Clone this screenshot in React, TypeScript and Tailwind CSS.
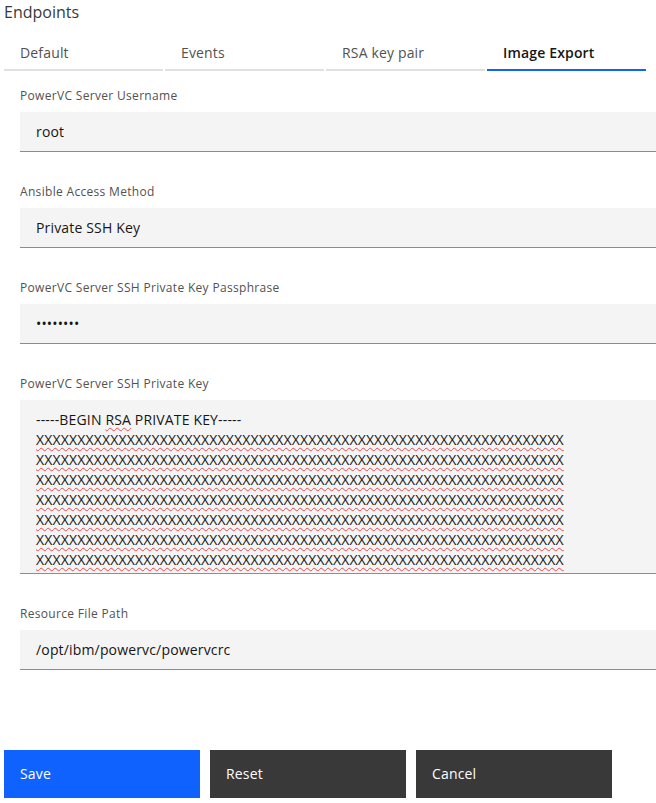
import React from "react";

const X = "X".repeat(64);

function Field({ label, value, mt }: { label: string; value: string; mt?: string }) {
  return (
    <div className={`flex flex-col ${mt ?? ""}`}>
      <div className="text-[12px] leading-[16px] tracking-[0.32px] text-[#525252] h-[16px]">{label}</div>
      <div className="mt-[8px] h-[40px] bg-[#f4f4f4] border-b border-[#8d8d8d] flex items-center pl-[16px] text-[14px] tracking-[0.16px] text-[#161616]">
        {value}
      </div>
    </div>
  );
}

export default function App() {
  const tabs = ["Default", "Events", "RSA key pair", "Image Export"];
  return (
    <div className="w-[656px] h-[803px] bg-white overflow-hidden" style={{ fontFamily: '"Open Sans", sans-serif' }}>
      <div className="pl-[4px] pt-[1px] text-[16px] leading-[22px] text-[#393939]">Endpoints</div>
      <div className="flex gap-[2px] pl-[4px] mt-[12px]">
        {tabs.map((t, i) => (
          <div
            key={t}
            className={`w-[159px] h-[36px] pl-[16px] pt-[8px] text-[14px] leading-[20px] tracking-[0.16px] border-b-2 ${
              i === 3 ? "border-[#0f62fe] text-[#161616] font-semibold" : "border-[#e0e0e0] text-[#525252]"
            }`}
          >
            {t}
          </div>
        ))}
      </div>
      <div className="pl-[20px] pt-[17px] flex flex-col">
        <Field label="PowerVC Server Username" value="root" />
        <Field label="Ansible Access Method" value="Private SSH Key" mt="mt-[32px]" />
        <Field label="PowerVC Server SSH Private Key Passphrase" value="••••••••" mt="mt-[32px]" />
        <div className="flex flex-col mt-[32px]">
          <div className="text-[12px] leading-[16px] tracking-[0.32px] text-[#525252] h-[16px]">PowerVC Server SSH Private Key</div>
          <div className="mt-[8px] h-[174px] bg-[#f4f4f4] border-b border-[#8d8d8d] pl-[16px] pt-[10px] overflow-hidden text-[14px] leading-[20px] tracking-[0.16px] text-[#161616] whitespace-pre">
            <div>
              -----BEGIN <span className="underline decoration-wavy decoration-[#e5484d] decoration-1 underline-offset-2">RSA</span> PRIVATE KEY-----
            </div>
            {Array.from({ length: 7 }).map((_, i) => (
              <div key={i}>
                <span className="underline decoration-wavy decoration-[#e5484d] decoration-1 underline-offset-2">{X}</span>
              </div>
            ))}
          </div>
        </div>
        <Field label="Resource File Path" value="/opt/ibm/powervc/powervcrc" mt="mt-[32px]" />
      </div>
      <div className="flex gap-[10px] pl-[4px] mt-[80px]">
        <div className="w-[196px] h-[48px] bg-[#0f62fe] text-white text-[14px] tracking-[0.16px] pl-[16px] pb-[2px] flex items-center">Save</div>
        <div className="w-[196px] h-[48px] bg-[#393939] text-white text-[14px] tracking-[0.16px] pl-[16px] pb-[2px] flex items-center">Reset</div>
        <div className="w-[196px] h-[48px] bg-[#393939] text-white text-[14px] tracking-[0.16px] pl-[16px] pb-[2px] flex items-center">Cancel</div>
      </div>
    </div>
  );
}
